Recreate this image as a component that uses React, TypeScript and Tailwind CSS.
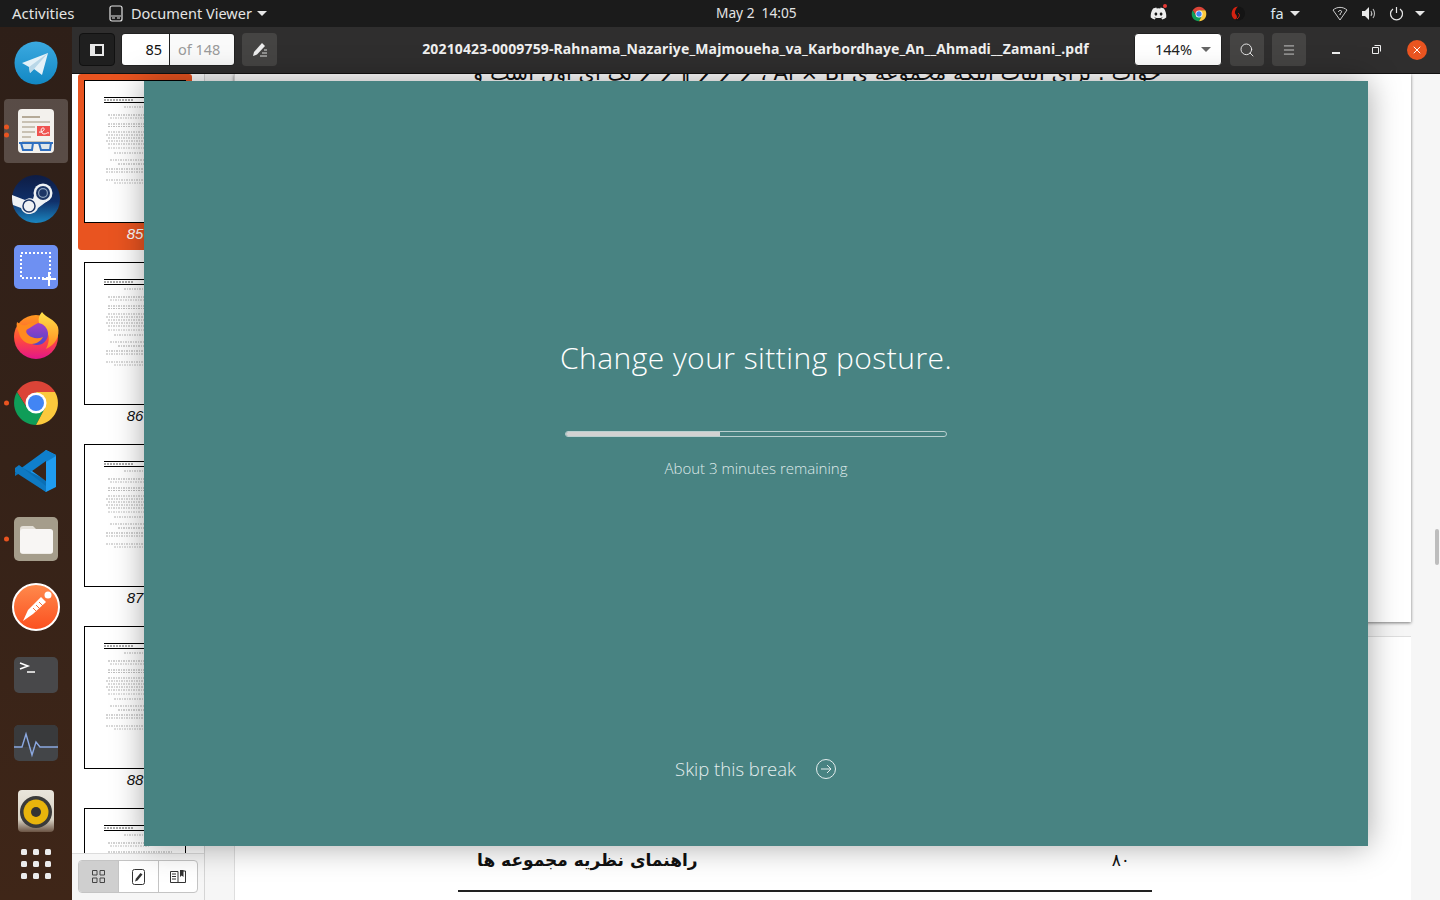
import { Menu, Search, X } from "lucide-react";
import { FaDiscord } from "react-icons/fa";
import type { ReactNode } from "react";

// Ubuntu desktop: top bar, dock, Document Viewer window, break reminder on top.

function Caret({ className = "border-t-[#e6e6e6]" }: { className?: string }) {
  return <span className={`inline-block h-0 w-0 border-x-[5px] border-t-[5px] border-x-transparent ${className}`} />;
}

function ChromeLogo({ size }: { size: number }) {
  return (
    <svg width={size} height={size} viewBox="0 0 48 48">
      <path d="M5 13A22 22 0 0 1 43 13L24 13 15 29Z" fill="#db4437" />
      <path d="M5 13A22 22 0 0 0 24 46L33 29 15 29Z" fill="#0f9d58" />
      <path d="M43 13A22 22 0 0 1 24 46L33 29 24 13Z" fill="#fbc93d" />
      <circle cx="24" cy="24" r="10.5" fill="#fff" />
      <circle cx="24" cy="24" r="8" fill="#4285f4" />
    </svg>
  );
}

function Telegram() {
  return (
    <svg width="44" height="44" viewBox="0 0 44 44">
      <defs>
        <linearGradient id="tg" x1="0" y1="0" x2="0" y2="1">
          <stop offset="0" stopColor="#3ba9e0" />
          <stop offset="1" stopColor="#1288c4" />
        </linearGradient>
      </defs>
      <circle cx="22" cy="22" r="21.5" fill="url(#tg)" />
      <path d="M8 22 34 12 28 34 20 28 16 32 15 26Z" fill="#e4f1f8" />
      <path d="M15 26 34 12 20 28 16 32Z" fill="#b9d7e8" />
    </svg>
  );
}

function Evince() {
  return (
    <svg width="38" height="46" viewBox="0 0 38 46">
      <rect x="1" y="1" width="36" height="44" rx="4" fill="#f3f1ed" />
      <rect x="5" y="8" width="18" height="2" fill="#b5aa98" />
      <g fill="#c9c1b3">
        <rect x="5" y="13" width="28" height="2" />
        <rect x="5" y="18" width="13" height="2" />
        <rect x="5" y="23" width="13" height="2" />
        <rect x="5" y="28" width="9" height="2" />
        <rect x="5" y="33" width="28" height="2" />
      </g>
      <rect x="20" y="18" width="13" height="10" fill="#ef5350" />
      <path d="M22 24c4 1 7-4 4-4s-2 6 1 6 3-2 5-1" fill="none" stroke="#fff" strokeWidth="1" />
      <path d="M2 35h34" stroke="#2f6fc0" strokeWidth="2" />
      <path d="M4 35h12l-1 7H6ZM22 35h12l-1 7H24Z" fill="#dfe6ea" stroke="#2f6fc0" strokeWidth="2" />
    </svg>
  );
}

function Steam() {
  return (
    <svg width="48" height="48" viewBox="0 0 48 48">
      <defs>
        <linearGradient id="st" x1="0" y1="0" x2="0" y2="1">
          <stop offset="0" stopColor="#0e1c44" />
          <stop offset="0.55" stopColor="#10306a" />
          <stop offset="1" stopColor="#1a86c0" />
        </linearGradient>
      </defs>
      <circle cx="24" cy="24" r="24" fill="url(#st)" />
      <path d="M0 20 13 25C16 23 19 23 21 24L24 14 38 24 26 33C24 40 12 42 9 33L1 30C0 27 0 23 0 20Z" fill="#eef1f4" />
      <circle cx="31" cy="18" r="9.500" fill="#eef1f4" />
      <circle cx="31" cy="18" r="7" fill="#1c3565" />
      <circle cx="31" cy="18" r="5" fill="#8ea3bd" />
      <circle cx="31" cy="18" r="3.800" fill="#1c3565" />
      <circle cx="17" cy="31" r="6" fill="none" stroke="#1c3565" strokeWidth="1.500" />
    </svg>
  );
}

function Screenshot() {
  return (
    <svg width="44" height="44" viewBox="0 0 44 44">
      <rect width="44" height="44" rx="5" fill="#6e90f2" />
      <rect x="7" y="8" width="29" height="25" fill="none" stroke="#fff" strokeWidth="2" strokeDasharray="2 2" />
      <path d="M35 27v14M28 34h14" stroke="#fff" strokeWidth="2" />
    </svg>
  );
}

function Firefox() {
  return (
    <svg width="48" height="48" viewBox="6 6 48 48">
      <defs>
        <linearGradient id="ffb" x1="0" y1="0" x2="0" y2="1">
          <stop offset="0" stopColor="#ff9a1f" />
          <stop offset="0.55" stopColor="#ff4a3d" />
          <stop offset="1" stopColor="#e2158a" />
        </linearGradient>
        <linearGradient id="ffy" x1="0" y1="0" x2="0" y2="1">
          <stop offset="0" stopColor="#ffe14a" />
          <stop offset="1" stopColor="#ff8a1f" />
        </linearGradient>
        <linearGradient id="ffp" x1="0" y1="0" x2="0" y2="1">
          <stop offset="0" stopColor="#a33fc8" />
          <stop offset="1" stopColor="#4f46c9" />
        </linearGradient>
      </defs>
      <circle cx="30" cy="32" r="22" fill="url(#ffb)" />
      <path d="M36 7C30 14 33 20 37 23 43 27 45 34 40 44 50 39 54 31 52 22 49 14 40 13 36 7Z" fill="url(#ffy)" />
      <circle cx="31" cy="29" r="11" fill="url(#ffp)" />
      <path d="M11 17C14 19 17 21 20 20 24 18 28 17 32 18 27 20 25 23 20 25 19 29 27 36 37 32 30 44 15 39 13 28 11 24 10 20 11 17Z" fill="#ff8a1f" />
    </svg>
  );
}

function VsCode() {
  return (
    <svg width="44" height="44" viewBox="0 0 44 44">
      <path d="M32 1 42 6V38L32 43 13 24Z" fill="#1f9cf0" />
      <path d="M32 1 42 6V7L32 13 13 25 6 20Z" fill="#0f7fcc" />
      <path d="M32 43 6 24 1 27 1 24 5 17 32 31Z" fill="#0a6fb5" />
      <path d="M32 12V32L18 22Z" fill="#3a2418" />
      <path d="M1 19 5 16 32 37V43L1 23Z" fill="#0e79c2" />
    </svg>
  );
}

function Files() {
  return (
    <svg width="44" height="44" viewBox="0 0 44 44">
      <rect width="44" height="44" rx="5" fill="#a59d8b" />
      <path d="M6 12a3 3 0 0 1 3-3h10l4 4h13a3 3 0 0 1 3 3v18a3 3 0 0 1-3 3H9a3 3 0 0 1-3-3Z" fill="#e4e0d8" />
      <rect x="6" y="12" width="33" height="24.500" rx="3" fill="#f8f6f4" />
    </svg>
  );
}

function Postman() {
  return (
    <svg width="48" height="48" viewBox="6 6 48 48">
      <defs>
        <linearGradient id="pm" x1="0" y1="0" x2="0" y2="1">
          <stop offset="0" stopColor="#ff8b4d" />
          <stop offset="1" stopColor="#fb4f1f" />
        </linearGradient>
      </defs>
      <circle cx="30" cy="30" r="23" fill="url(#pm)" stroke="#fff" strokeWidth="2" />
      <circle cx="42" cy="18" r="3.500" fill="#fff" />
      <path d="M35 20 40 25 27 37 17 44 22 33Z" fill="#fff" />
      <path d="M33 25 37 29M30 28 34 32M27 31 31 35" stroke="#f9703a" strokeWidth="1" />
    </svg>
  );
}

function Terminal() {
  return (
    <svg width="44" height="36" viewBox="0 0 44 36">
      <rect width="44" height="36" rx="5" fill="#48484a" />
      <path d="M6 6 14 9 6 12" fill="none" stroke="#fff" strokeWidth="1.500" />
      <path d="M13 15h8" stroke="#fff" strokeWidth="1.500" />
    </svg>
  );
}

function Monitor() {
  return (
    <svg width="44" height="36" viewBox="0 0 44 36">
      <rect width="44" height="36" rx="5" fill="#434548" />
      <rect width="44" height="22" rx="5" fill="#393a3c" />
      <path d="M0 22H8L12 9 18 30 22 17 26 22H44" fill="none" stroke="#8ba8e0" strokeWidth="1.400" />
    </svg>
  );
}

function Rhythmbox() {
  return (
    <svg width="38" height="42" viewBox="0 0 38 42">
      <defs>
        <linearGradient id="rb" x1="0" y1="0" x2="0" y2="1">
          <stop offset="0" stopColor="#e9e5dc" />
          <stop offset="0.7" stopColor="#d8d2c4" />
          <stop offset="1" stopColor="#6b5444" />
        </linearGradient>
      </defs>
      <rect x="1" y="0" width="36" height="42" rx="4" fill="url(#rb)" />
      <circle cx="19" cy="22" r="16" fill="#3a3a3a" />
      <circle cx="19" cy="22" r="12.500" fill="#e8b40c" />
      <circle cx="19" cy="22" r="5" fill="#333" />
    </svg>
  );
}

function DockItem({ children, active, dots = 0 }: { children: ReactNode; active?: boolean; dots?: number }) {
  return (
    <div className="relative flex h-[68px] w-[72px] items-center justify-center">
      {active && <div className="absolute inset-x-[4px] inset-y-[2px] rounded-[4px] bg-white/20" />}
      {dots > 0 && (
        <div className="absolute left-[4px] top-1/2 flex -translate-y-1/2 flex-col gap-[3px]">
          {Array.from({ length: dots }).map((_, i) => (
            <span key={i} className="h-[5px] w-[5px] rounded-full bg-[#e95420]" />
          ))}
        </div>
      )}
      <div className="relative flex">{children}</div>
    </div>
  );
}

function Dock() {
  return (
    <div className="flex h-full w-[72px] shrink-0 flex-col bg-gradient-to-b from-[#2e1f18] via-[#352218] to-[#3f2618] pt-[2px]">
      <DockItem><Telegram /></DockItem>
      <DockItem active dots={2}><Evince /></DockItem>
      <DockItem><Steam /></DockItem>
      <DockItem><Screenshot /></DockItem>
      <DockItem><Firefox /></DockItem>
      <DockItem dots={1}><ChromeLogo size={48} /></DockItem>
      <DockItem><VsCode /></DockItem>
      <DockItem dots={1}><Files /></DockItem>
      <DockItem><Postman /></DockItem>
      <DockItem><Terminal /></DockItem>
      <DockItem><Monitor /></DockItem>
      <DockItem><Rhythmbox /></DockItem>
      <div className="mt-[-2px] grid w-[72px] grid-cols-[6px_6px_6px] justify-center gap-x-[6px] gap-y-[6px] pt-[6px]">
        {Array.from({ length: 9 }).map((_, i) => (
          <span key={i} className="h-[6px] w-[6px] rounded-[1.5px] bg-[#ececec]" />
        ))}
      </div>
    </div>
  );
}

function TopBar() {
  return (
    <div className="grid h-[27px] shrink-0 grid-cols-[716px_auto_1fr] items-center bg-[#1b1b1b] text-[14.500px] text-[#e4e4e4]">
      <div className="flex items-center">
        <span className="ml-[12px] w-[97px] text-[15px]">Activities</span>
        <svg width="14" height="17" viewBox="0 0 14 17" className="mr-[8px]">
          <rect x="1" y="1" width="12" height="15" rx="2" fill="none" stroke="#e4e4e4" strokeWidth="1.200" />
          <path d="M2 11h10M3 13h3M8 13h3" stroke="#e4e4e4" strokeWidth="1.200" />
        </svg>
        <span>Document Viewer</span>
        <Caret className="ml-[5px] border-t-[#e6e6e6]" />
      </div>
      <div className="whitespace-pre text-[13.700px]">May 2  14:05</div>
      <div className="flex items-center">
        <span className="relative ml-[353px] flex w-[38px]">
          <FaDiscord className="text-[17px] text-[#eeeeee]" />
          <span className="absolute left-[13px] top-[-1px] h-[4px] w-[4px] rounded-full bg-[#e53935]" />
        </span>
        <span className="ml-[3px] flex w-[39px]"><ChromeLogo size={16} /></span>
        <svg width="16" height="17" viewBox="0 0 16 17" className="mr-[25px]">
          <circle cx="8" cy="8.500" r="7" fill="#141414" />
          <path d="M8 1.500a7 7 0 0 0-3 13c3-1 2-4 .500-5.500S6 3 8 1.500Z" fill="#d32211" />
          <path d="M8 8c2 1.500 2 3.500-1 6" stroke="#d32211" strokeWidth="1" fill="none" />
        </svg>
        <span className="w-[19px] text-[#dce8f2]">fa</span>
        <Caret />
        <svg width="16" height="15" viewBox="0 0 16 15" className="ml-[32px] mr-[13px]">
          <path d="M1 4c4-3.500 10-3.500 14 0l-7 10Z" fill="none" stroke="#cccccc" strokeWidth="1" />
          <path d="M6.500 6c0-2 3.500-2 3-.200S8 7 8 9" fill="none" stroke="#eeeeee" strokeWidth="1" />
        </svg>
        <svg width="16" height="15" viewBox="0 0 16 15" className="mr-[12px]">
          <path d="M1 5h3l4-4v13l-4-4H1Z" fill="#e8e8e8" />
          <path d="M10 5c1 1.500 1 3.500 0 5M12 3c2 2.500 2 6.500 0 9" fill="none" stroke="#bdbdbd" strokeWidth="1.100" />
        </svg>
        <svg width="15" height="15" viewBox="0 0 15 15" className="mr-[11px]">
          <path d="M4 3a6 6 0 1 0 7 0M7.500 1v6" fill="none" stroke="#e8e8e8" strokeWidth="1.200" />
        </svg>
        <Caret />
      </div>
    </div>
  );
}

function HeaderBar() {
  return (
    <div className="flex h-[47px] shrink-0 items-start border-b border-[#111] bg-[#2f2e2e] pl-[7px] pr-[13px] pt-[6px] text-[14.500px]">
      <button className="flex h-[33px] w-[36px] items-center justify-center rounded-[4px] border border-[#111] bg-[#1f1f1f]">
        <svg width="14" height="12" viewBox="0 0 14 12">
          <path d="M0 0h14v12H0ZM5 2v8h7V2Z" fill="#e8e8e8" fillRule="evenodd" />
        </svg>
      </button>
      <div className="ml-[6px] flex h-[33px] w-[114px] overflow-hidden rounded-[4px] border border-[#222]">
        <div className="w-[48px] border-r border-[#222] bg-white pr-[7px] text-right leading-[30px] text-[#111]">85</div>
        <div className="flex-1 bg-[#fafafa] pl-[8px] leading-[30px] text-[#9b9b9b]">of 148</div>
      </div>
      <button className="ml-[7px] flex h-[33px] w-[35px] items-center justify-center rounded-[4px] bg-[#454443]">
        <svg width="16" height="15" viewBox="0 0 16 15">
          <path d="M1 14 2 10 10 1 13 4 5 12.500Z" fill="#eeeeee" />
          <path d="M8 14h7M10 11h5M12 8h3" stroke="#dddddd" strokeWidth="1" />
        </svg>
      </button>
      <div className="ml-[100px] min-w-0 flex-1 text-center text-[14px] font-bold leading-[32px] tracking-[0.13px] text-[#f0f0f0]">
        20210423-0009759-Rahnama_Nazariye_Majmoueha_va_Karbordhaye_An__Ahmadi__Zamani_.pdf
      </div>
      <div className="flex h-[33px] w-[88px] items-center justify-between rounded-[4px] border border-[#222] bg-white pl-[20px] pr-[10px] text-[#222]">
        <span>144%</span>
        <Caret className="border-t-[#666]" />
      </div>
      <button className="ml-[8px] flex h-[33px] w-[34px] items-center justify-center rounded-[4px] bg-[#454443]">
        <Search size={16} strokeWidth={1.400} className="text-[#eeeeee]" />
      </button>
      <button className="ml-[8px] flex h-[33px] w-[34px] items-center justify-center rounded-[4px] bg-[#454443]">
        <Menu size={14} strokeWidth={1.300} className="text-[#eeeeee]" />
      </button>
      <span className="ml-[26px] mt-[19px] h-[1.500px] w-[8px] bg-[#eeeeee]" />
      <svg width="9" height="9" viewBox="0 0 9 9" className="ml-[32px] mt-[12px]">
        <path d="M.5 2.500h6v6h-6ZM2.500.5h6v6" fill="none" stroke="#eeeeee" strokeWidth="1" />
      </svg>
      <span className="ml-[26px] mt-[7px] flex h-[20px] w-[20px] items-center justify-center rounded-full bg-[#e95420]">
        <X size={12} strokeWidth={2} className="text-white" />
      </span>
    </div>
  );
}

// scribbled text of a page miniature: [y, x, width, darkness]
const thumbLines = [
  [27, 40, 40, 0.3], [35, 24, 60, 0.35], [38, 26, 40, 0.25], [44, 24, 64, 0.35], [46.500, 24, 62, 0.25],
  [52, 24, 64, 0.3], [55, 22, 66, 0.3], [58, 24, 60, 0.3], [61, 22, 64, 0.3], [64, 24, 50, 0.3],
  [68, 24, 60, 0.25], [73, 30, 50, 0.3], [80, 26, 50, 0.3], [84, 34, 40, 0.35], [89, 22, 60, 0.35],
  [92, 22, 60, 0.3], [100, 22, 60, 0.3], [103, 30, 50, 0.25],
];

function Thumb({ page, selected, cut }: { page: number; selected?: boolean; cut?: boolean }) {
  return (
    <div className={`mb-[6px] ml-[6px] h-[176px] w-[114px] shrink-0 rounded-[3px] px-[6px] pt-[6px] ${selected ? "bg-[#e95420]" : ""}`}>
      <svg width="102" height="143" viewBox="0 0 102 143" className="block bg-white">
        <rect x="0.5" y="0.5" width="101" height="142" fill="none" stroke="#000" />
        <path d="M20 17.500H90M20 22.500H90" stroke="#000" strokeWidth="1" />
        <path d="M20 20H50" stroke="#555" strokeWidth="1" strokeDasharray="2 1" />
        {thumbLines.map(([y, x, w, o], i) => (
          <path key={i} d={`M${x} ${y}h${w}`} stroke="#000" strokeWidth="1" strokeDasharray="2 1 1 1" opacity={o} />
        ))}
      </svg>
      {!cut && (
        <div className={`mt-[1px] text-center font-['Liberation_Sans',sans-serif] text-[15px] italic leading-[20px] ${selected ? "text-white" : "text-[#111]"}`}>
          {page}
        </div>
      )}
    </div>
  );
}

function Sidebar() {
  return (
    <div className="flex w-[133px] shrink-0 flex-col border-r border-[#d5d5d5] bg-white">
      <div className="min-h-0 flex-1 overflow-hidden">
        <Thumb page={85} selected />
        <Thumb page={86} />
        <Thumb page={87} />
        <Thumb page={88} />
        <Thumb page={89} cut />
      </div>
      <div className="flex h-[47px] shrink-0 items-start border-t border-[#dcdcdc] bg-[#f6f6f6] pl-[6px] pt-[6px]">
        <div className="flex h-[33px] w-[120px] overflow-hidden rounded-[4px] border border-[#c4c4c4] bg-white">
          <div className="flex w-[40px] items-center justify-center border-r border-[#c4c4c4] bg-[#cfcfcf]">
            <svg width="13" height="13" viewBox="0 0 13 13">
              <path d="M.5.5h4.500v4.500H.5ZM8 .5h4.500v4.500H8ZM.5 8h4.500v4.500H.5ZM8 8h4.500v4.500H8Z" fill="none" stroke="#444" />
            </svg>
          </div>
          <div className="flex w-[40px] items-center justify-center border-r border-[#c4c4c4]">
            <svg width="13" height="16" viewBox="0 0 13 16">
              <rect x=".5" y=".5" width="12" height="15" rx="2" fill="none" stroke="#333" />
              <path d="M3 12.500 4 9.500 8.500 4 10.500 5.500 5.500 11.500Z" fill="#333" />
            </svg>
          </div>
          <div className="flex flex-1 items-center justify-center">
            <svg width="16" height="14" viewBox="0 0 16 14">
              <path d="M8 1.500H.5v11H8M8 1.500v11M11 1H15.500v11.500H8" fill="none" stroke="#333" />
              <path d="M10 0h3.500v7L11.700 5.500 10 7Z" fill="#333" />
              <path d="M2 4h4M2 6.500h4M2 9h4" stroke="#333" />
            </svg>
          </div>
        </div>
      </div>
    </div>
  );
}

function DocumentArea() {
  const farsi = "font-['DejaVu_Sans','Noto_Sans_CJK_SC',sans-serif]";
  return (
    <div className="relative min-w-0 flex-1 overflow-hidden bg-[#f6f6f6] pl-[29px]">
      <div className="h-[548px] w-[1177px] overflow-hidden border-l border-[#d8d8d8] bg-white shadow-[0_1px_3px_rgba(0,0,0,0.5)]">
        <div dir="rtl" className={`mt-[-10px] whitespace-nowrap pr-[250px] text-[21px] leading-[18px] text-[#111] ${farsi}`}>
          جواب : برای اثبات اینکه مجموعه ی Ai × Bi ، ∑ ∑ ∑ ‖ ∑ ∑ یک ای اول است و
        </div>
      </div>
      <div className="mt-[14px] h-[300px] w-[1177px] border-l border-t border-[#dedede] bg-white">
        <div className="ml-[223px] mt-[210px] flex w-[694px] items-center justify-between border-b-2 border-[#222] pb-[17px] pl-[19px] pr-[22px]">
          <span className={`text-[17px] font-bold leading-[26px] text-[#111] ${farsi}`}>راهنمای نظریه مجموعه ها</span>
          <span className={`text-[17px] leading-[26px] text-[#111] ${farsi}`}>۸۰</span>
        </div>
      </div>
      <div className="absolute right-[1px] top-[455px] h-[36px] w-[4px] rounded-full bg-[#bdbdbd]" />
    </div>
  );
}

function BreakOverlay() {
  return (
    <div className="absolute left-[144px] top-[81px] flex h-[765px] w-[1224px] flex-col items-center bg-[#488382] pt-[257px] font-['Open_Sans',sans-serif] font-light text-white shadow-[0_0_30px_rgba(0,0,0,0.35)]">
      <div className="text-[30px] leading-[40px] tracking-[0.45px]">Change your sitting posture.</div>
      <div className="mt-[53px] h-[6px] w-[382px] overflow-hidden rounded-full border border-[#b9cfcf]">
        <div className="h-full w-[154px] bg-[#d2d2d2]" />
      </div>
      <div className="mt-[21px] text-[15px] leading-[20px] text-[#dfe9e9]">About 3 minutes remaining</div>
      <div className="mb-[63px] mt-auto flex h-[28px] items-center text-[18.500px] text-[#e4eeee]">
        <span>Skip this break</span>
        <svg width="22" height="22" viewBox="0 0 22 22" className="ml-[19px]">
          <circle cx="11" cy="11" r="9.500" fill="none" stroke="#e4eeee" strokeWidth="1" />
          <path d="M6 11h10M12 7l4 4-4 4" fill="none" stroke="#e4eeee" strokeWidth="1" />
        </svg>
      </div>
    </div>
  );
}

export default function App() {
  return (
    <div className="relative flex h-[900px] w-[1440px] flex-col overflow-hidden font-['Noto_Sans',sans-serif]">
      <TopBar />
      <div className="flex min-h-0 flex-1">
        <Dock />
        <div className="flex min-w-0 flex-1 flex-col">
          <HeaderBar />
          <div className="flex min-h-0 flex-1">
            <Sidebar />
            <DocumentArea />
          </div>
        </div>
      </div>
      <BreakOverlay />
    </div>
  );
}
